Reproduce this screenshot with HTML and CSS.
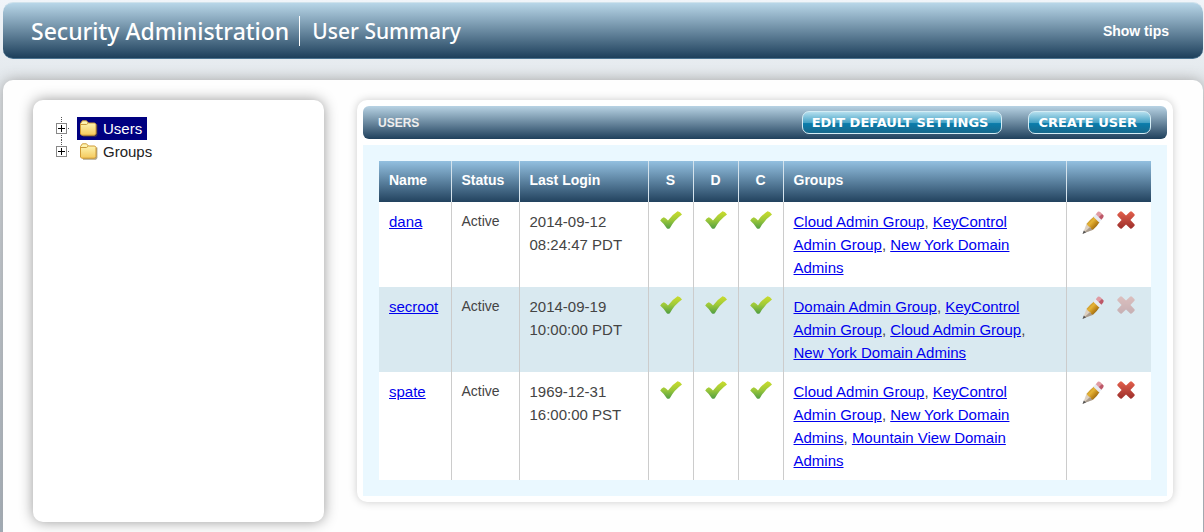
FILE: index.html
```html
<!DOCTYPE html>
<html lang="en">
<head>
  <meta charset="UTF-8">
  <meta name="viewport" content="width=device-width, initial-scale=1">
  <title>Security Administration | User Summary</title>
  <link rel="stylesheet" href="styles.css">
</head>
<body>
  <!-- shared icon shapes -->
  <svg class="defs" aria-hidden="true">
    <defs>
      <linearGradient id="green" x1="0" y1="0" x2="0" y2="1">
        <stop offset="0.1" stop-color="#c4d92e"/>
        <stop offset="0.5" stop-color="#9cc83a"/>
        <stop offset="1" stop-color="#4f9d43"/>
      </linearGradient>
      <linearGradient id="red" x1="0" y1="0" x2="0" y2="1">
        <stop offset="0" stop-color="#e3604d"/>
        <stop offset="1" stop-color="#9c2f2b"/>
      </linearGradient>
      <linearGradient id="yellow" x1="0" y1="0" x2="0" y2="1">
        <stop offset="0" stop-color="#fffcc0"/>
        <stop offset="1" stop-color="#f5c95c"/>
      </linearGradient>
      <linearGradient id="wood" x1="0" y1="0" x2="1" y2="1">
        <stop offset="0.15" stop-color="#b98a2a"/>
        <stop offset="0.4" stop-color="#e6b436"/>
        <stop offset="0.6" stop-color="#c48c1c"/>
        <stop offset="0.9" stop-color="#80530e"/>
      </linearGradient>
      <symbol id="check" viewBox="0 0 22 18">
        <path fill="url(#green)" d="M0.2 9.4 Q1.5 7 3.8 6.2 Q6 7 8 9.4 Q12 3.8 17.6 0.2 Q20.2 0.4 22 3.6 Q14.4 9 10 17 Q8.4 18.6 6.8 17.2 Q4 12.6 0.2 9.4Z"/>
      </symbol>
      <symbol id="cross" viewBox="0 0 18 18">
        <path fill="url(#red)" d="M3 0.7 Q4 -0.2 5 0.8 L9 4.6 L13 0.8 Q14 -0.2 15 0.7 L17.3 3 Q18.2 4 17.2 5 L13.4 9 L17.2 13 Q18.2 14 17.3 15 L15 17.3 Q14 18.2 13 17.2 L9 13.4 L5 17.2 Q4 18.2 3 17.3 L0.7 15 Q-0.2 14 0.8 13 L4.6 9 L0.8 5 Q-0.2 4 0.7 3Z"/>
      </symbol>
      <symbol id="pencil" viewBox="0 0 22 24">
        <path fill="#ddd0c0" d="M1 22.5 L4.6 12.5 L11.2 18.8Z"/>
        <path fill="#a99c8e" d="M1 22.5 L8 16 L11.2 18.8Z"/>
        <path fill="#555" d="M0.5 23 L1.8 19.6 L4 21.6Z"/>
        <path fill="url(#wood)" d="M4.6 12.8 Q8 8.5 12 5.4 L17.6 11 Q15 15.5 11 18.8 Q9 18.4 8.4 16.2 Q5.8 15.8 4.6 12.8Z"/>
        <path fill="#e6ebf2" d="M11.3 5.8 L13.8 3 L19.6 8.8 L17.2 11.4Z"/>
        <path fill="#e09aa2" d="M13.8 3.2 L15.8 0.8 Q17 0 18.2 1 L20 2.8 L16.6 6Z"/>
        <path fill="#bd5767" d="M20 2.8 L21.3 4.3 Q22 5.4 21.2 6.6 L19.4 8.8 L16.6 6Z"/>
      </symbol>
      <symbol id="folder" viewBox="0 0 18 17">
        <path fill="#6b5a25" opacity="0.55" d="M3 4.5h14.4v10.5l-1.4 1.8H3z"/>
        <path fill="url(#yellow)" stroke="#d09a35" d="M0.5 14V3.5L2.4 0.8H6.5L8.4 3H14.8L16 4.4V13.6L14.6 15.2H1.6Z"/>
        <path fill="none" stroke="#c99a3c" d="M1 4.5H6.5L8.4 3"/>
      </symbol>
    </defs>
  </svg>

  <header class="page-header">
    <h1>Security Administration</h1>
    <h2>User Summary</h2>
    <a class="show-tips" href="#">Show tips</a>
  </header>

  <main class="content">
    <nav class="tree" aria-label="Users and groups">
      <ul>
        <li>
          <button class="expander" aria-label="Expand Users"></button>
          <a class="node selected" href="#"><svg class="folder"><use href="#folder"/></svg>Users</a>
        </li>
        <li>
          <button class="expander" aria-label="Expand Groups"></button>
          <a class="node" href="#"><svg class="folder"><use href="#folder"/></svg>Groups</a>
        </li>
      </ul>
    </nav>

    <section class="panel">
      <div class="panel-bar">
        <h3>USERS</h3>
        <button class="action">EDIT DEFAULT SETTINGS</button>
        <button class="action">CREATE USER</button>
      </div>
      <div class="panel-body">
        <table class="users">
          <thead>
            <tr>
              <th class="name">Name</th>
              <th class="status">Status</th>
              <th class="login">Last Login</th>
              <th class="flag">S</th>
              <th class="flag">D</th>
              <th class="flag">C</th>
              <th>Groups</th>
              <th class="tools"></th>
            </tr>
          </thead>
          <tbody>
            <tr>
              <td><a href="#">dana</a></td>
              <td class="status">Active</td>
              <td>2014-09-12<br>08:24:47 PDT</td>
              <td class="flag"><svg class="check"><use href="#check"/></svg></td>
              <td class="flag"><svg class="check"><use href="#check"/></svg></td>
              <td class="flag"><svg class="check"><use href="#check"/></svg></td>
              <td class="groups"><a href="#">Cloud Admin Group</a>, <a href="#">KeyControl Admin Group</a>, <a href="#">New York Domain Admins</a></td>
              <td class="tools">
                <div class="buttons">
                  <button aria-label="Edit dana"><svg class="pencil"><use href="#pencil"/></svg></button>
                  <button aria-label="Delete dana"><svg class="cross"><use href="#cross"/></svg></button>
                </div>
              </td>
            </tr>
            <tr>
              <td><a href="#">secroot</a></td>
              <td class="status">Active</td>
              <td>2014-09-19<br>10:00:00 PDT</td>
              <td class="flag"><svg class="check"><use href="#check"/></svg></td>
              <td class="flag"><svg class="check"><use href="#check"/></svg></td>
              <td class="flag"><svg class="check"><use href="#check"/></svg></td>
              <td class="groups"><a href="#">Domain Admin Group</a>, <a href="#">KeyControl Admin Group</a>, <a href="#">Cloud Admin Group</a>, <a href="#">New York Domain Admins</a></td>
              <td class="tools">
                <div class="buttons">
                  <button aria-label="Edit secroot"><svg class="pencil"><use href="#pencil"/></svg></button>
                  <button aria-label="Delete secroot" disabled><svg class="cross"><use href="#cross"/></svg></button>
                </div>
              </td>
            </tr>
            <tr>
              <td><a href="#">spate</a></td>
              <td class="status">Active</td>
              <td>1969-12-31<br>16:00:00 PST</td>
              <td class="flag"><svg class="check"><use href="#check"/></svg></td>
              <td class="flag"><svg class="check"><use href="#check"/></svg></td>
              <td class="flag"><svg class="check"><use href="#check"/></svg></td>
              <td class="groups"><a href="#">Cloud Admin Group</a>, <a href="#">KeyControl Admin Group</a>, <a href="#">New York Domain Admins</a>, <a href="#">Mountain View Domain Admins</a></td>
              <td class="tools">
                <div class="buttons">
                  <button aria-label="Edit spate"><svg class="pencil"><use href="#pencil"/></svg></button>
                  <button aria-label="Delete spate"><svg class="cross"><use href="#cross"/></svg></button>
                </div>
              </td>
            </tr>
          </tbody>
        </table>
      </div>
    </section>
  </main>
</body>
</html>
```

FILE: styles.css
```css
* {
  box-sizing: border-box;
  margin: 0;
  padding: 0;
}

body {
  display: flex;
  flex-direction: column;
  min-height: 100vh;
  padding: 2px 1px 0 3px;
  background: linear-gradient(#f0f4f9, #e4e9ed 80px, #c2cad2 250px, #9eabb8);
  font-family: "Liberation Sans", Arial, sans-serif;
  font-size: 15px;
  color: #444;
}

button {
  border: none;
  background: none;
  font: inherit;
  cursor: pointer;
}

.defs {
  position: absolute;
  width: 0;
  height: 0;
}

/* top bar */
.page-header {
  display: flex;
  align-items: center;
  height: 57px;
  padding: 0 34px 0 28px;
  border-top: 1px solid #cfe2ec;
  border-bottom: 1px solid #4b7390;
  border-radius: 10px;
  background: linear-gradient(#b8d6e8, #1d3f5b);
  color: #fff;
}

.page-header h1,
.page-header h2 {
  font-family: "Noto Sans", sans-serif;
  font-weight: 500;
  line-height: 30px;
}

.page-header h1 {
  padding-right: 10px;
  border-right: 1px solid #fff;
  font-size: 23px;
}

.page-header h2 {
  padding-left: 12px;
  font-size: 21px;
}

.show-tips {
  margin-left: auto;
  color: #fff;
  font-size: 14px;
  font-weight: bold;
  text-decoration: none;
}

/* main area */
.content {
  flex: 1;
  display: flex;
  align-items: flex-start;
  gap: 33px;
  margin-top: 21px;
  padding: 20px 30px 10px;
  border-radius: 10px 10px 0 0;
  background: #fefefe;
  box-shadow: 0 0 14px #a5a5a5;
}

.tree {
  flex: none;
  width: 291px;
  height: 422px;
  padding: 17px 23px;
  border-radius: 10px;
  background: #fff;
  box-shadow: 0 0 14px #999;
}

.tree ul {
  list-style: none;
}

/* dotted lines that join the nodes */
.tree li {
  display: flex;
  align-items: center;
  height: 23px;
  background:
    repeating-linear-gradient(#555 0 1px, transparent 1px 2px) 5px 0 / 1px 100% no-repeat,
    linear-gradient(#555, #555) 12px 11px / 1px 1px no-repeat;
}

.tree li:last-child {
  background-size: 1px 12px, 1px 1px;
}

.expander {
  width: 11px;
  height: 11px;
  border: 1px solid #888;
  background:
    linear-gradient(#000, #000) center / 7px 1px no-repeat,
    linear-gradient(#000, #000) center / 1px 7px no-repeat,
    #fff;
}

.node {
  display: flex;
  align-items: center;
  gap: 5px;
  height: 23px;
  margin-left: 10px;
  padding: 0 5px 0 3px;
  color: #222;
  text-decoration: none;
}

.node.selected {
  background: #000080;
  color: #fff;
}

.folder {
  width: 18px;
  height: 17px;
}

/* users panel */
.panel {
  flex: 1;
  padding: 6px;
  border-radius: 10px;
  background: #fff;
  box-shadow: 0 0 8px #ccc;
}

.panel-bar {
  display: flex;
  align-items: center;
  gap: 26px;
  height: 33px;
  margin-bottom: 6px;
  padding: 0 16px 0 15px;
  border-radius: 6px;
  background: linear-gradient(#b8d3e4, #1f405c);
}

.panel-bar h3 {
  margin-right: auto;
  color: #eee;
  font-size: 12px;
}

.action {
  height: 23px;
  padding: 0 13px 0 9px;
  border: 1px solid #d5edf5;
  border-radius: 7px;
  background: linear-gradient(#b4dfee, #48a3c6 50%, #0b7cab 55%, #17688b);
  color: #fff;
  font-family: "DejaVu Sans", Verdana, sans-serif;
  font-size: 13px;
  font-weight: bold;
  line-height: 19px;
}

.panel-body {
  padding: 16px;
  background: #eaf8ff;
}

.users {
  width: 100%;
  border-collapse: collapse;
  background: #fff;
  line-height: 23px;
}

.users th,
.users td {
  padding: 8px 10px;
  border-right: 1px solid #ccc;
  text-align: left;
  vertical-align: top;
}

.users th {
  height: 41px;
  border-color: #d5e3ec;
  font-size: 14px;
  color: #fff;
}

.users thead tr {
  background: linear-gradient(#93c0e0, #22425e);
}

.users tbody tr:nth-child(even) {
  background: #d9e9f0;
}

.users th:last-child,
.users td:last-child {
  border-right: none;
}

.users a {
  color: #0000ee;
}

.users .name { width: 72px; }
.users th.login { width: 129px; }
.users .status { width: 68px; }
.users td.status { font-size: 14px; }

.users .flag {
  width: 45px;
  padding-left: 0;
  padding-right: 0;
  text-align: center;
}

.users td.flag,
.users td.tools {
  padding-top: 9px;
}

.users td.groups {
  padding-right: 30px;
}

.users .tools {
  width: 85px;
  padding-left: 15px;
}

.buttons {
  display: flex;
  align-items: flex-start;
  gap: 13px;
}

.buttons svg,
.flag svg {
  display: inline-block;
  vertical-align: top;
}

.check { width: 22px; height: 18px; }
.pencil { width: 22px; height: 24px; }
.cross { width: 18px; height: 18px; }

.buttons button:disabled {
  opacity: 0.3;
}
```
